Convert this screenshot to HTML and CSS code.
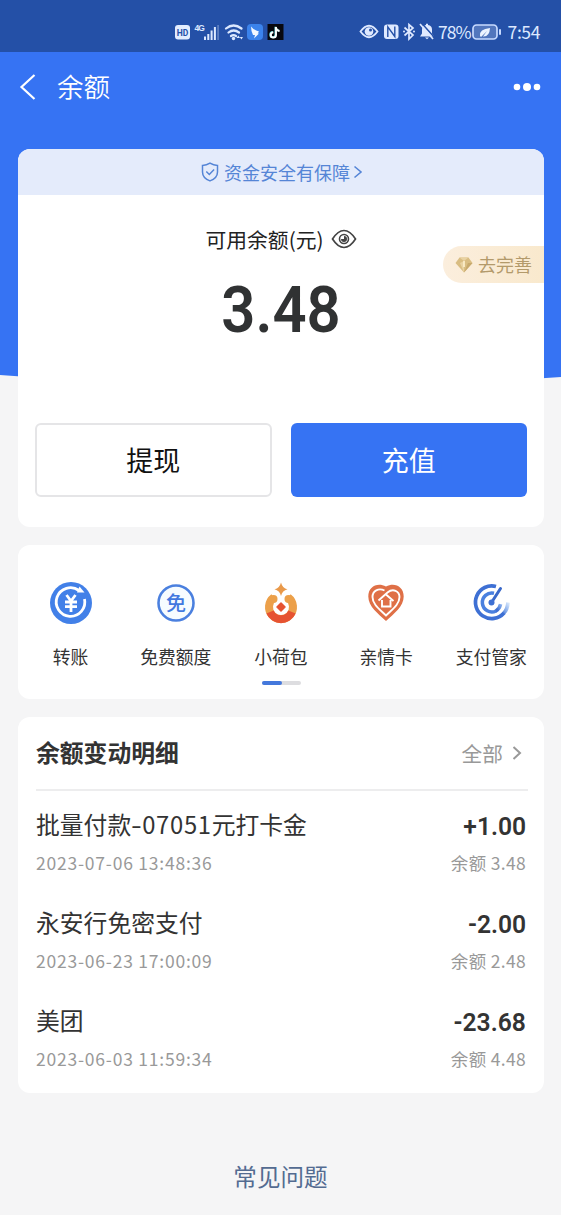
FILE: index.html
```
<!DOCTYPE html>
<html lang="zh-CN">
<head>
<meta charset="utf-8">
<title>余额</title>
<link rel="stylesheet" href="styles.css">
</head>
<body>
<div class="page">
  <svg class="backdrop" viewBox="0 0 561 330" preserveAspectRatio="none"><path d="M0 0H561V325Q280 345 0 323Z" fill="#3673f3"/></svg>
  <header class="status">
    <svg class="status-left" width="112" height="20" viewBox="174 21 112 20">
      <rect x="175" y="24" width="15" height="14.500" rx="3" fill="#e3edff"/>
      <text x="182.5" y="34.5" text-anchor="middle" class="hd">HD</text>
      <text x="194.500" y="29.500" class="net">4G</text>
      <g fill="#dce8ff"><rect x="204" y="35.500" width="2" height="3.500"/><rect x="207.300" y="33" width="2" height="6"/><rect x="210.600" y="29.500" width="2" height="9.500"/><rect x="213.900" y="26" width="2" height="13"/><rect x="217.200" y="24" width="1.800" height="15" opacity=".3"/></g>
      <g fill="none" stroke="#dce8ff" stroke-width="2.200" stroke-linecap="round"><path d="M226 27.500q7.500-6 15.500 0M228.500 31.500q5.200-4 10.500 0M231 35q2.500-1.800 5 0"/></g>
      <circle cx="233.500" cy="37.500" r="1.700" fill="#dce8ff"/><path d="M236.500 37l1.900-2.500 1.600 2.500zM239.800 36h3.200l-1.600 2.500z" fill="#dce8ff"/>
      <rect x="247" y="23" width="16" height="16" rx="4" fill="#3b83ec"/><path d="M251 25.500q2 3 8 5l-1.300 2h1.300l-5 5 1-3.500h-2q-2-4-2-8.500z" fill="#f3f8ff"/>
      <rect x="267.500" y="23" width="16" height="16" fill="#08080f"/>
      <path d="M276 26v8a2.600 2.600 0 1 1-2.600-2.600M276 27q.8 2.700 3.600 3" fill="none" stroke="#72e3e7" stroke-width="2" transform="translate(-.5 -.3)"/><path d="M276 26v8a2.600 2.600 0 1 1-2.600-2.600M276 27q.8 2.700 3.600 3" fill="none" stroke="#fff" stroke-width="1.900"/>
    </svg>
    <svg width="78" height="20" viewBox="358 22 78 20">
      <path d="M360.500 31.500q8.500-11.500 17 0q-8.500 11.500-17 0z" fill="none" stroke="#dfe9ff" stroke-width="1.800"/><circle cx="369" cy="31.500" r="4.300" fill="#dfe9ff"/><circle cx="370.500" cy="30" r="1.500" fill="#2450a7"/>
      <rect x="384" y="24.500" width="14.500" height="14.500" rx="3" fill="#dfe9ff"/><path d="M387.800 37V26.800l7 9.700V26.500" fill="none" stroke="#2450a7" stroke-width="1.400"/>
      <path d="M404.500 27.500l8.500 7.500-4 4V24.500l4 3.500-8.500 7.500" fill="none" stroke="#dfe9ff" stroke-width="1.700"/><circle cx="404" cy="31.500" r="1" fill="#dfe9ff"/><circle cx="414" cy="31.500" r="1" fill="#dfe9ff"/>
      <path d="M420 36.500l2-3v-4q0-4 4-4.500v-1.200h2V25q4 .5 4 4.500v4l2 3z" fill="#dfe9ff"/><path d="M425 37.500h4l-2 1.700z" fill="#dfe9ff"/><path d="M421.500 23l13 14.500" stroke="#2450a7" stroke-width="1.500"/><path d="M420 24l13 15" stroke="#dfe9ff" stroke-width="1.700"/>
    </svg>
    <span class="percent">78%</span>
    <svg class="battery" width="32" height="18" viewBox="471 23 32 18">
      <rect x="473" y="25" width="24" height="14" rx="3.500" fill="#5276bd" stroke="#c7daff" stroke-width="1.700"/><rect x="499" y="29" width="2" height="6" rx="1" fill="#c7daff"/><path d="M480 36q-1-7 10-8q-.5 9-7 8.500l4-5.500-6 6z" fill="#edf4ff"/>
    </svg>
    <span class="clock">7:54</span>
  </header>
  <nav class="nav">
    <svg width="18" height="28" viewBox="0 0 18 28"><path d="M15.500 2L2.500 14l13 12" fill="none" stroke="#fff" stroke-width="2.200"/></svg>
    <h1 class="nav-title">余额</h1>
    <svg class="more" width="28" height="10" viewBox="0 0 28 10" fill="#fff"><circle cx="4" cy="5" r="3.300"/><circle cx="14" cy="5" r="4"/><circle cx="24" cy="5" r="3.300"/></svg>
  </nav>
  <main class="cards">
    <section class="card balance">
      <div class="safety">
        <svg width="18" height="20" viewBox="0 0 18 20" fill="none" stroke="#5585d6" stroke-width="1.500"><path d="M9 1.200q3.500 2.200 7.500 2.200v6.500q0 6-7.500 9q-7.500-3-7.500-9V3.400q4 0 7.500-2.200z"/><path d="M5.300 9.500l3 3 4.800-5"/></svg>
        <span>资金安全有保障</span>
        <svg class="safety-arrow" width="10" height="14" viewBox="0 0 10 14"><path d="M1.500 1.500L8 7l-6.500 5.500" fill="none" stroke="#5585d6" stroke-width="1.600"/></svg>
      </div>
      <div class="available"><span>可用余额(元)</span>
        <svg width="26" height="20" viewBox="0 0 26 20" fill="none" stroke="#444"><path d="M1.500 10Q7 1.500 13 1.500T24.500 10Q19 18.500 13 18.500T1.500 10z" stroke-width="1.700"/><circle cx="13" cy="10" r="4.500" stroke-width="1.600"/><path d="M13 7v3h-3a3 3 0 0 0 3 3 3 3 0 0 0 0-6z" fill="#444" stroke="none"/></svg>
      </div>
      <div class="amount">3.48</div>
      <div class="improve">
        <svg width="18" height="16" viewBox="0 0 18 16"><path d="M4.500.5h9L17.500 6 9 15.500.5 6z" fill="#d9bd82"/><path d="M4.500.5L9 4l4.500-3.500zM9 4v11.500L5 6z" fill="#e9d3a3"/><path d="M9 15.500L13 6l4.500 0z" fill="#c7a96d"/><path d="M8.300 4h1.500v6H8.300z" fill="#fff3d2"/></svg>
        <span>去完善</span>
      </div>
      <div class="actions"><button class="button plain">提现</button><button class="button primary">充值</button></div>
    </section>
    <section class="card services">
      <div class="service">
        <svg width="46" height="46" viewBox="0 0 46 46"><circle cx="23" cy="23" r="21" fill="#4280e8"/><path d="M36.500 19A14.300 14.300 0 1 1 31 10.500" fill="none" stroke="#fff" stroke-width="2.800"/><path d="M29 12.500h7.500l-5-6z" fill="#fff"/><path d="M18.500 15l4.500 6 4.500-6M17 22h12M17 26.700h12M23 21v11" fill="none" stroke="#fff" stroke-width="2.800"/></svg><span>转账</span></div>
      <div class="service">
        <svg width="46" height="46" viewBox="0 0 46 46"><circle cx="23" cy="23" r="17.500" fill="#f6fcff" stroke="#4b80df" stroke-width="2.600"/><text x="23" y="30.500" text-anchor="middle" class="free">免</text></svg><span>免费额度</span></div>
      <div class="service">
        <svg width="46" height="46" viewBox="0 0 46 46"><g fill="none" stroke-width="8"><path d="M15.800 17.400A12 12 0 1 0 30.200 17.400" stroke="#eca04a"/><path d="M12 32A12 12 0 0 0 34 32" stroke="#e65332"/></g><circle cx="15.500" cy="19" r="4" fill="#eca04a"/><circle cx="30.500" cy="19" r="4" fill="#eca04a"/><path d="M23 23l4 4-4 4-4-4z" fill="#e65332" stroke="#e65332" stroke-width="1.500" stroke-linejoin="round"/><path d="M23 2.500q1.300 5.500 6.500 6.800q-5.200 1.300-6.500 6.700-1.300-5.400-6.500-6.700 5.200-1.300 6.500-6.800z" fill="#e9994a"/></svg><span>小荷包</span></div>
      <div class="service">
        <svg width="46" height="46" viewBox="0 0 46 46"><path d="M23 6.500C14 2 5.300 7 5.300 16.500c0 10 9.700 17 17.700 24.500 8-7.500 17.700-14.500 17.700-24.500C40.700 7 32 2 23 6.500z" fill="#df7047"/><path d="M15.500 20.500l9-8C30 8 36.500 11 36.500 17c0 7.500-7.500 12.500-13.500 18.500C17 29.500 9.500 24.500 9.500 17c0-6 6-9.500 12-6.500" fill="none" stroke="#fff" stroke-width="1.900"/><path d="M23 14.500l7.500 6.500M19 20v6.500h8.500V20" fill="none" stroke="#fff" stroke-width="1.900"/></svg><span>亲情卡</span></div>
      <div class="service">
        <svg width="46" height="46" viewBox="0 0 46 46"><defs><linearGradient id="fade" gradientUnits="userSpaceOnUse" x1="30" y1="30" x2="42" y2="19"><stop stop-color="#3e70d4"/><stop offset="1" stop-color="#5ba0f5" stop-opacity="0"/></linearGradient></defs><g fill="none"><path d="M28 6.500A16.300 16.300 0 1 0 36 33" stroke="#3e70d4" stroke-width="3.700"/><path d="M35.500 33.500q4-4 4.500-11" stroke="url(#fade)" stroke-width="3.700"/><path d="M26 13.200A9.500 9.500 0 1 0 28 31" stroke="#4a80df" stroke-width="3.500"/><path d="M27.600 31.200q4-2 5-7" stroke="url(#fade)" stroke-width="3.500"/><path d="M23.500 22.500L32.500 8.500" stroke="#3968c9" stroke-width="3" stroke-linecap="round"/></g><circle cx="23.500" cy="22.500" r="3" fill="#3e70d4"/></svg><span>支付管家</span></div>
      <div class="pager"><i class="pager-on"></i></div>
    </section>
    <section class="card details">
      <div class="details-head"><h2>余额变动明细</h2><span class="all">全部</span><svg width="10" height="16" viewBox="0 0 10 16"><path d="M1.500 2L8 8l-6.500 6" fill="none" stroke="#999" stroke-width="2"/></svg></div>
      <div class="entry"><div><div class="name">批量付款<span class="dash">-</span><span class="digits">07051</span>元打卡金</div><div class="date">2023-07-06 13:48:36</div></div><div class="right"><div class="change">+1.00</div><div class="rest">余额 3.48</div></div></div>
      <div class="entry"><div><div class="name">永安行免密支付</div><div class="date">2023-06-23 17:00:09</div></div><div class="right"><div class="change">-2.00</div><div class="rest">余额 2.48</div></div></div>
      <div class="entry"><div><div class="name">美团</div><div class="date">2023-06-03 11:59:34</div></div><div class="right"><div class="change">-23.68</div><div class="rest">余额 4.48</div></div></div>
    </section>
  </main>
  <footer class="faq">常见问题</footer>
</div>
</body>
</html>
```
FILE: styles.css
```
* { box-sizing: border-box; }
body { margin: 0; background: #f5f5f6; font-family: "Noto Sans CJK SC", sans-serif; color: #333; }
svg { display: block; flex: none; }
.page { position: relative; width: 561px; height: 1215px; overflow: hidden; }
.backdrop { position: absolute; left: 0; top: 52px; width: 561px; height: 330px; z-index: -1; }
.status { height: 52px; background: #2450a7; display: flex; align-items: center; padding: 11px 21px 0 174px; color: #dce8ff; }
.status-left { margin-right: 72px; }
.hd { font: 700 8.500px Roboto, sans-serif; fill: #2450a7; }
.net { font: 700 8.500px "Liberation Sans", sans-serif; fill: #dce8ff; letter-spacing: -1px; }
.percent { font-size: 17.500px; line-height: 20px; width: 33px; margin-left: 2px; letter-spacing: -1px; white-space: nowrap; }
.battery { margin-right: 5px; }
.clock { font-size: 17.500px; line-height: 20px; white-space: nowrap; letter-spacing: -.400px; }
.nav { height: 97px; display: flex; align-items: center; padding: 0 20px 27px 19px; }
.nav-title { margin: 0 auto 2px 20px; font-size: 26.500px; line-height: 36px; font-weight: 350; color: #fff; }
.cards { padding: 0 17px 0 18px; display: flex; flex-direction: column; gap: 18px; }
.card { background: #fff; border-radius: 12px; overflow: hidden; }
.balance { position: relative; height: 378px; }
.safety { height: 46px; background: #e4ebfb; display: flex; justify-content: center; align-items: center; color: #5585d6; font-size: 18px; line-height: 24px; padding-left: 2px; }
.safety span { margin: 0 0 1px 5px; }
.safety-arrow { margin-left: 3px; }
.available { height: 30px; margin-top: 29px; display: flex; justify-content: center; align-items: center; gap: 7px; color: #222; font-size: 20.800px; line-height: 30px; }
.available span { margin-bottom: 1px; }
.amount { height: 76px; margin-top: 18px; font: 600 65px/76px Roboto, sans-serif; text-align: center; color: #303233; transform: scaleX(.920); }
.improve { position: absolute; right: 0; top: 97px; width: 101px; height: 37px; border-radius: 19px 0 0 19px; background: linear-gradient(90deg, #fbeedd, #f9e9cd); color: #b39a6b; display: flex; align-items: center; padding-left: 12px; gap: 5px; font-size: 18px; line-height: 24px; }
.improve span { margin-bottom: 2px; }
.actions { display: grid; grid-template-columns: 1fr 1fr; gap: 19px; padding: 0 17px; margin-top: 75px; }
.button { height: 74px; border-radius: 6px; border: 0; font-family: inherit; font-size: 27px; line-height: 36px; padding: 0; }
.plain { background: #fff; border: 2px solid #e5e5e7; color: #111; }
.primary { background: #3673f3; color: #fff; }
.services { height: 154px; display: grid; grid-template-columns: repeat(5, 105.200px); grid-template-rows: 100px 8px; padding-top: 35px; }
.service { display: flex; flex-direction: column; align-items: center; font-size: 17.800px; line-height: 26px; white-space: nowrap; }
.service span { margin-top: 17px; }
.free { font: 500 20px "Noto Sans CJK SC", sans-serif; fill: #4279df; }
.pager { grid-column: 1 / -1; justify-self: center; width: 39px; height: 4px; border-radius: 2px; background: #dddde0; margin: 1px 0 0 2px; }
.pager-on { display: block; width: 20px; height: 4px; border-radius: 2px; background: #4478dc; }
.details { height: 376px; padding: 0 18px; }
.details-head { height: 74px; border-bottom: 2px solid #ededee; display: flex; align-items: center; margin-right: -2px; padding: 0 6px 0 0; margin-bottom: 16px; }
.details-head h2 { margin: 0 auto 3px 0; font-size: 23.800px; line-height: 34px; font-weight: 700; }
.all { color: #999; font-size: 20.700px; line-height: 30px; margin: 0 9px 1px 0; }
.entry { height: 98px; display: flex; justify-content: space-between; }
.name { font-size: 23.800px; line-height: 34px; white-space: nowrap; }
.dash { display: inline-block; width: 11px; transform: scaleX(1.300); transform-origin: left; }
.digits { letter-spacing: .700px; }
.date, .rest { font-size: 17.500px; line-height: 24px; color: #999; margin-top: 10px; }
.date { letter-spacing: .780px; }
.right { text-align: right; }
.change { font: 600 26.500px/38px Roboto, sans-serif; transform: scaleX(.930); transform-origin: right; }
.rest { margin-top: 6px; letter-spacing: .320px; }
.faq { margin-top: 65px; text-align: center; font-size: 23.600px; line-height: 36px; color: #536b91; }
```
